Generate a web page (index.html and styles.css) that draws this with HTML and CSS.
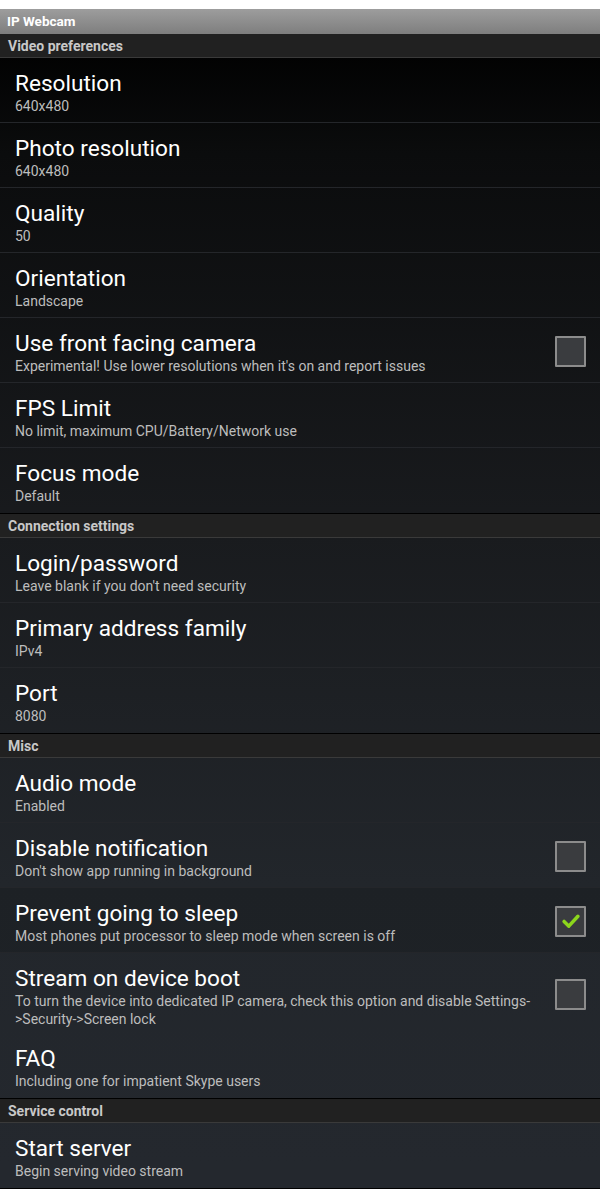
FILE: index.html
```html
<!DOCTYPE html>
<html>
<head>
<meta charset="utf-8">
<link rel="stylesheet" href="styles.css">
</head>
<body>
<div class="screen">
  <div class="titlebar">IP Webcam</div>
  <div class="list">
    <div class="section">Video preferences</div>
    <div class="item"><div class="text"><div class="title">Resolution</div><div class="summary">640x480</div></div></div>
    <div class="item"><div class="text"><div class="title">Photo resolution</div><div class="summary">640x480</div></div></div>
    <div class="item"><div class="text"><div class="title">Quality</div><div class="summary">50</div></div></div>
    <div class="item"><div class="text"><div class="title">Orientation</div><div class="summary">Landscape</div></div></div>
    <div class="item"><div class="text"><div class="title">Use front facing camera</div><div class="summary">Experimental! Use lower resolutions when it's on and report issues</div></div><div class="check"></div></div>
    <div class="item"><div class="text"><div class="title">FPS Limit</div><div class="summary">No limit, maximum CPU/Battery/Network use</div></div></div>
    <div class="item last"><div class="text"><div class="title">Focus mode</div><div class="summary">Default</div></div></div>
    <div class="section">Connection settings</div>
    <div class="item"><div class="text"><div class="title">Login/password</div><div class="summary">Leave blank if you don't need security</div></div></div>
    <div class="item"><div class="text"><div class="title">Primary address family</div><div class="summary">IPv4</div></div></div>
    <div class="item last"><div class="text"><div class="title">Port</div><div class="summary">8080</div></div></div>
    <div class="section">Misc</div>
    <div class="item"><div class="text"><div class="title">Audio mode</div><div class="summary">Enabled</div></div></div>
    <div class="item"><div class="text"><div class="title">Disable notification</div><div class="summary">Don't show app running in background</div></div><div class="check"></div></div>
    <div class="item dim"><div class="text"><div class="title">Prevent going to sleep</div><div class="summary">Most phones put processor to sleep mode when screen is off</div></div><div class="check on"><svg viewBox="0 0 30 30" width="26" height="26"><path d="M7 15.5 L12.5 21 L23 9.5" fill="none" stroke="#8cd61c" stroke-width="4" stroke-linecap="round" stroke-linejoin="round"/></svg></div></div>
    <div class="item tall"><div class="text"><div class="title">Stream on device boot</div><div class="summary">To turn the device into dedicated IP camera, check this option and disable Settings-&gt;Security-&gt;Screen lock</div></div><div class="check"></div></div>
    <div class="item last"><div class="text"><div class="title">FAQ</div><div class="summary">Including one for impatient Skype users</div></div></div>
    <div class="section">Service control</div>
    <div class="item last"><div class="text"><div class="title">Start server</div><div class="summary">Begin serving video stream</div></div></div>
  </div>
</div>
</body>
</html>
```

FILE: styles.css
```css
html, body {
  margin: 0;
  padding: 0;
  background: #ffffff;
}
body {
  font-family: Roboto, "Noto Sans", sans-serif;
}
.screen {
  padding-top: 9px;
  width: 600px;
}
.titlebar {
  height: 25px;
  box-sizing: border-box;
  padding: 4px 0 0 7px;
  background: linear-gradient(#9d9d9d, #7e7e7e);
  color: #ffffff;
  font-weight: bold;
  font-size: 13.5px;
  line-height: 17px;
}
.list {
  background: linear-gradient(#000000 0px, #0b0c0d 120px, #191b1e 500px, #22262b 850px, #24282e 1130px);
}
.section {
  height: 24px;
  box-sizing: border-box;
  padding: 4px 0 0 8px;
  background: #212121;
  border-bottom: 1px solid #3a3a3a;
  color: #c8c8c8;
  font-weight: bold;
  font-size: 14px;
  line-height: 16px;
}
.item {
  display: flex;
  align-items: flex-start;
  min-height: 65px;
  box-sizing: border-box;
  padding: 12px 14px 0 15px;
  border-bottom: 1px solid #24262a;
}
.item.last {
  min-height: 66px;
  border-bottom: 1px solid #000000;
}
.item.dim {
  background: rgba(0, 0, 0, 0.12);
}
.item.tall {
  min-height: 80px;
  border-bottom: none;
}
.text {
  flex: 1;
}
.title {
  color: #ffffff;
  font-size: 22.6px;
  line-height: 27px;
}
.summary {
  color: #bdbdbd;
  font-size: 14px;
  line-height: 18px;
  padding-right: 12px;
}
.check {
  align-self: center;
  margin-top: -10px;
  width: 31px;
  height: 31px;
  box-sizing: border-box;
  border: 2px solid #8c8c8c;
  background: #3a3c3f;
  border-radius: 1px;
  flex: none;
  display: flex;
  align-items: center;
  justify-content: center;
}
```
